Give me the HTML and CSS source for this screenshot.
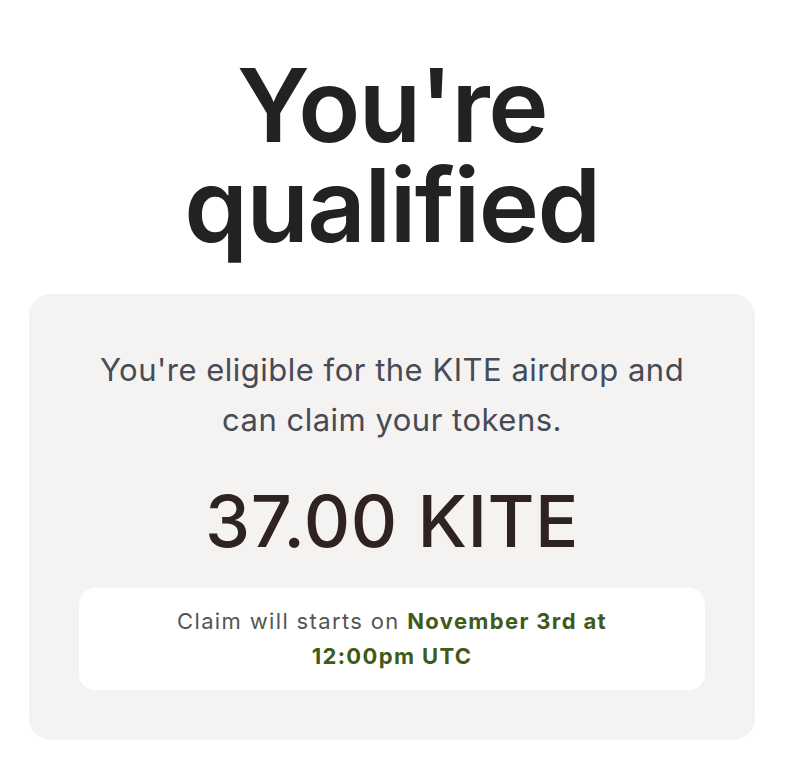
FILE: index.html
```html
<!DOCTYPE html>
<html>
<head>
<meta charset="utf-8">
<link rel="stylesheet" href="styles.css">
</head>
<body>
<main class="page">
  <h1 class="title"><span class="title-line">You're</span><span class="title-line">qualified</span></h1>
  <section class="card">
    <p class="desc">You're eligible for the KITE airdrop and<br>can claim your tokens.</p>
    <div class="amount">37.00 KITE</div>
    <div class="notice">
      <p>Claim will starts on <strong>November 3rd at<br>12:00pm UTC</strong></p>
    </div>
  </section>
</main>
</body>
</html>
```
FILE: styles.css
```css
* { box-sizing: border-box; }
html, body { margin: 0; padding: 0; background: #ffffff; }
body { font-family: Inter, "Noto Sans", sans-serif; }
.page {
  display: flex;
  flex-direction: column;
  align-items: center;
  padding: 55px 32px 0 29px;
}
.title {
  margin: 0;
  display: flex;
  flex-direction: column;
  align-items: center;
  font-size: 102px;
  line-height: 100px;
  font-weight: 600;
  letter-spacing: -1.5px;
  color: #222222;
  text-align: center;
}
.title-line { display: block; height: 100px; }
.card {
  margin-top: 39px;
  width: 100%;
  background: #f5f3f1;
  border-radius: 22px;
  padding: 51px 40px 50px;
  display: flex;
  flex-direction: column;
  align-items: center;
}
.desc {
  margin: 0;
  font-size: 31px;
  line-height: 50px;
  color: #464b57;
  text-align: center;
  letter-spacing: 0.5px;
}
.amount {
  margin-top: 36px;
  font-size: 72px;
  line-height: 80px;
  font-weight: 500;
  color: #2f2321;
  letter-spacing: 0.5px;
}
.notice {
  margin-top: 27px;
  width: calc(100% - 20px);
  background: #ffffff;
  border-radius: 16px;
  padding: 16px 20px;
  text-align: center;
}
.notice p {
  margin: 0;
  font-size: 22px;
  line-height: 35px;
  color: #555555;
  letter-spacing: 1.35px;
}
.notice strong {
  color: #3f5a19;
  font-weight: 700;
}
```
